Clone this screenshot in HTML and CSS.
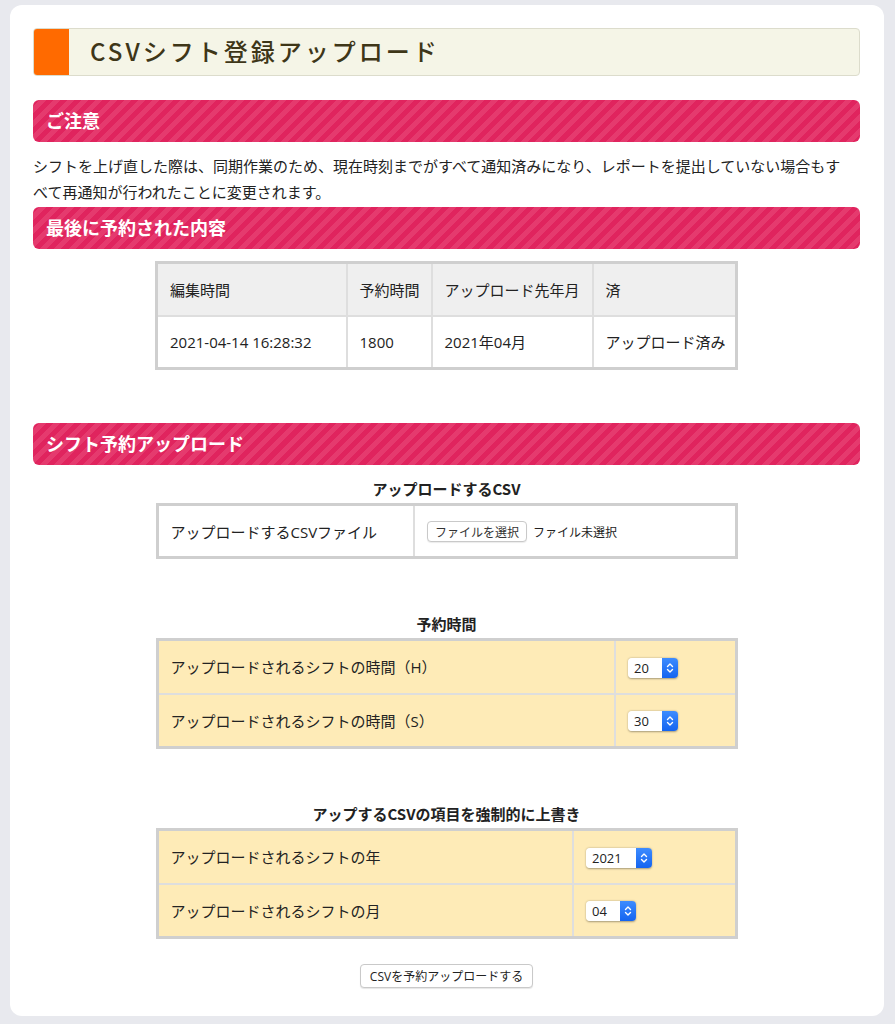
FILE: index.html
```html
<!DOCTYPE html>
<html lang="ja">
<head>
    <meta charset="UTF-8">
    <meta name="viewport" content="width=device-width, initial-scale=1.0">
    <title>CSVシフト登録アップロード</title>
    <link rel="stylesheet" href="styles.css">
</head>
<body>
    <div class="card">
        <h1 class="page-title"><span class="title-mark"></span><span class="title-text">CSVシフト登録アップロード</span></h1>

        <h2 class="band">ご注意</h2>
        <p class="notice">シフトを上げ直した際は、同期作業のため、現在時刻までがすべて通知済みになり、レポートを提出していない場合もすべて再通知が行われたことに変更されます。</p>

        <h2 class="band">最後に予約された内容</h2>
        <table class="grid last">
            <tr class="head">
                <td class="c1">編集時間</td>
                <td class="c2">予約時間</td>
                <td class="c3">アップロード先年月</td>
                <td class="c4">済</td>
            </tr>
            <tr>
                <td>2021-04-14 16:28:32</td>
                <td>1800</td>
                <td>2021年04月</td>
                <td>アップロード済み</td>
            </tr>
        </table>

        <h2 class="band band-gap">シフト予約アップロード</h2>
        <form id="uploadForm">
            <table class="grid form-table">
                <caption>アップロードするCSV</caption>
                <tr>
                    <td class="label-cell file-label">アップロードするCSVファイル</td>
                    <td>
                        <label class="file-pick">
                            <input type="file" id="csvFile" accept=".csv">
                            <span class="file-btn">ファイルを選択</span>
                            <span class="file-name" id="fileName">ファイル未選択</span>
                        </label>
                    </td>
                </tr>
            </table>

            <table class="grid form-table yellow">
                <caption>予約時間</caption>
                <tr>
                    <td class="label-cell time-label">アップロードされるシフトの時間（H）</td>
                    <td>
                        <span class="select-box">
                            <select name="hour">
                                <option>19</option>
                                <option selected>20</option>
                                <option>21</option>
                            </select>
                            <span class="select-arrow"><svg width="8" height="12" viewBox="0 0 8 12"><path d="M1.5 4.5 4 2l2.5 2.5M1.5 7.5 4 10l2.5-2.5" fill="none" stroke="#fff" stroke-width="1.4" stroke-linecap="round" stroke-linejoin="round"/></svg></span>
                        </span>
                    </td>
                </tr>
                <tr>
                    <td class="label-cell">アップロードされるシフトの時間（S）</td>
                    <td>
                        <span class="select-box">
                            <select name="minute">
                                <option>00</option>
                                <option selected>30</option>
                            </select>
                            <span class="select-arrow"><svg width="8" height="12" viewBox="0 0 8 12"><path d="M1.5 4.5 4 2l2.5 2.5M1.5 7.5 4 10l2.5-2.5" fill="none" stroke="#fff" stroke-width="1.4" stroke-linecap="round" stroke-linejoin="round"/></svg></span>
                        </span>
                    </td>
                </tr>
            </table>

            <table class="grid form-table yellow">
                <caption>アップするCSVの項目を強制的に上書き</caption>
                <tr>
                    <td class="label-cell ym-label">アップロードされるシフトの年</td>
                    <td>
                        <span class="select-box">
                            <select name="year" class="wide">
                                <option>2020</option>
                                <option selected>2021</option>
                                <option>2022</option>
                            </select>
                            <span class="select-arrow"><svg width="8" height="12" viewBox="0 0 8 12"><path d="M1.5 4.5 4 2l2.5 2.5M1.5 7.5 4 10l2.5-2.5" fill="none" stroke="#fff" stroke-width="1.4" stroke-linecap="round" stroke-linejoin="round"/></svg></span>
                        </span>
                    </td>
                </tr>
                <tr>
                    <td class="label-cell">アップロードされるシフトの月</td>
                    <td>
                        <span class="select-box">
                            <select name="month">
                                <option>03</option>
                                <option selected>04</option>
                                <option>05</option>
                            </select>
                            <span class="select-arrow"><svg width="8" height="12" viewBox="0 0 8 12"><path d="M1.5 4.5 4 2l2.5 2.5M1.5 7.5 4 10l2.5-2.5" fill="none" stroke="#fff" stroke-width="1.4" stroke-linecap="round" stroke-linejoin="round"/></svg></span>
                        </span>
                    </td>
                </tr>
            </table>

            <div class="actions">
                <button type="submit" class="submit-btn">CSVを予約アップロードする</button>
            </div>
        </form>
    </div>

    <script>
        document.getElementById('csvFile').addEventListener('change', (e) => {
            const f = e.target.files[0];
            document.getElementById('fileName').textContent = f ? f.name : 'ファイル未選択';
        });
    </script>
</body>
</html>
```

FILE: styles.css
```css
html { background: #e8e9ee; }
body { margin: 0; padding: 5px 11px 9px 10px; font-family: "Open Sans", "Noto Sans CJK JP", sans-serif; color: #222; }
.card { background: #fff; border-radius: 12px; padding: 23px 24px 28px 23px; }

.page-title { display: flex; margin: 0; height: 48px; box-sizing: border-box; background: #f5f5e7; border: 1px solid #dcdccc; border-radius: 4px; overflow: hidden; }
.title-mark { width: 35px; background: #ff6a00; flex: none; }
.title-text { padding-left: 21px; font-family: "Noto Sans CJK JP", sans-serif; font-size: 24px; line-height: 44px; font-weight: 500; letter-spacing: 3px; color: #3e3618; }

.band { margin: 24px 0 0; height: 42px; line-height: 40px; padding-left: 13px; border-radius: 6px; color: #fff; font-size: 18px; font-weight: bold;
    font-family: "Noto Sans CJK JP", sans-serif;
    background: repeating-linear-gradient(-45deg, #e0245e 0, #e0245e 5px, #e53a6e 5px, #e53a6e 10px); }
.band-gap { margin-top: 53px; }

.notice { margin: 11px 0 2px; padding-right: 12px; font-size: 15px; line-height: 26px; }
.notice + .band { margin-top: 0; }

.grid { margin: 0 auto; width: 583px; table-layout: fixed; border-collapse: collapse; border: 3px solid #cfcfcf; font-size: 15px; color: #222; }
.grid td { box-sizing: border-box; border: 2px solid #dedede; padding: 0 12px; height: 53px; white-space: nowrap; }
.last { margin-top: 12px; }
.last .head td { background: #efefef; }
.last .c1 { width: 190px; }
.last .c2 { width: 85px; }
.last .c3 { width: 161px; }

.form-table caption { font-weight: bold; font-size: 15px; line-height: 20px; padding-bottom: 4px; color: #222; font-family: "Noto Sans CJK JP", sans-serif; }
.form-table { margin-top: 14px; width: 582px; }
.form-table + .form-table { margin-top: 55px; }
.file-label { width: 257px; height: 58px; }
.time-label { width: 458px; }
.ym-label { width: 416px; }
.yellow td { background: #feebb7; height: 54px; }

.file-pick { display: inline-flex; align-items: center; gap: 6px; font-size: 12px; cursor: pointer; font-family: "Noto Sans CJK JP", sans-serif; }
.file-pick input { display: none; }
.file-btn { border: 1px solid #c9c9c9; border-radius: 4px; padding: 1px 7px; background: #fff; box-shadow: 0 1px 1px rgba(0,0,0,0.08); color: #333; }

.select-box { display: inline-flex; height: 20px; border-radius: 4px; box-shadow: 0 0.5px 2px rgba(0,0,0,0.35); overflow: hidden; vertical-align: middle; }
.select-box select { appearance: none; -webkit-appearance: none; border: none; background: #fff; font: 13px "Open Sans", sans-serif; color: #222; padding: 0 6px; width: 34px; outline: none; }
.select-box select.wide { width: 50px; }
.select-arrow { width: 16px; display: flex; align-items: center; justify-content: center; background: linear-gradient(#3d8cff, #1464f0); }

.actions { text-align: center; margin-top: 25px; }
.submit-btn { font: 12px "Open Sans", "Noto Sans CJK JP", sans-serif; color: #222; background: #fff; border: 1px solid #c9c9c9; border-radius: 4px; padding: 2px 9px; box-shadow: 0 1px 1px rgba(0,0,0,0.1); cursor: pointer; }
```
